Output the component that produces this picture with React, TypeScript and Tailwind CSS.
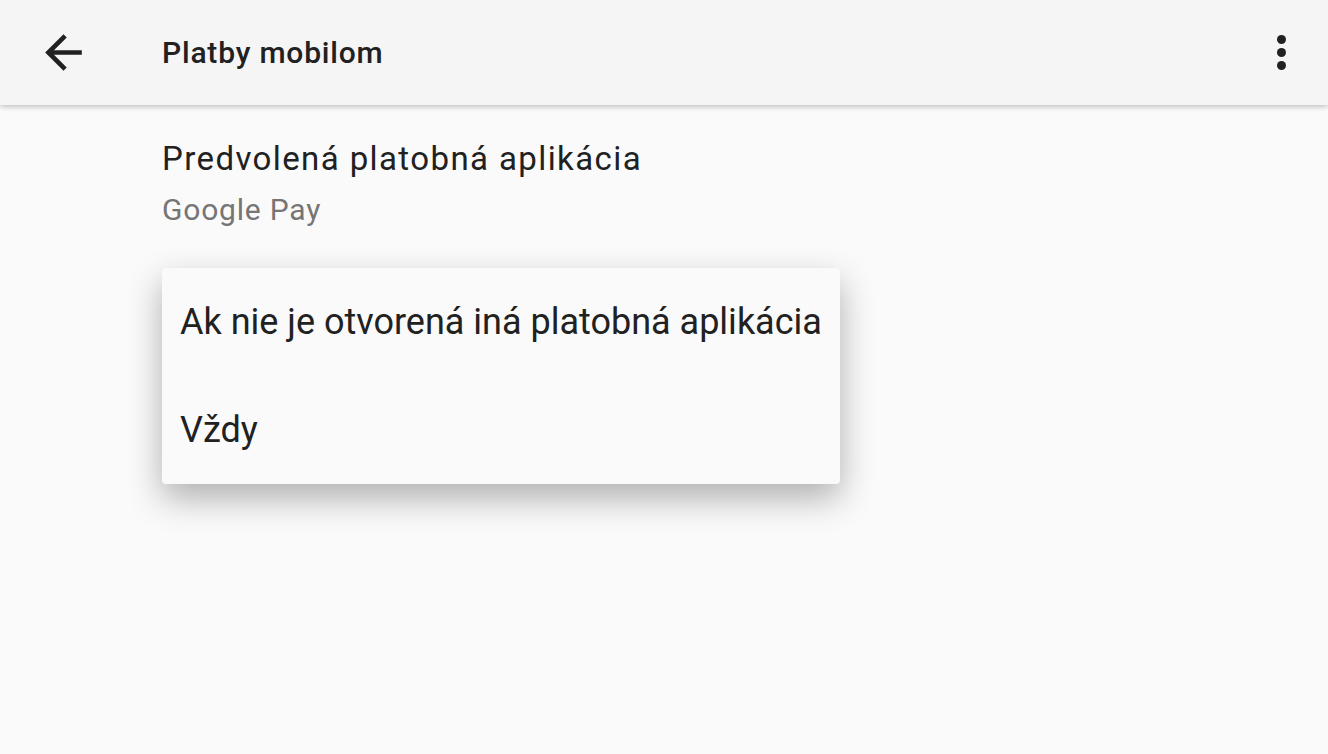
const options = ["Ak nie je otvorená iná platobná aplikácia", "Vždy"];

export default function App() {
  return (
    <div className="relative h-[754px] w-[1328px] overflow-hidden bg-[#fafafa] font-['Roboto',sans-serif] text-[#212121]">
      <header className="relative z-10 flex h-[105px] items-center bg-[#f5f5f5] shadow-[0_2px_5px_rgba(0,0,0,0.22)]">
        <div className="flex w-[162px] items-center pl-[36px]">
          <svg viewBox="0 0 24 24" className="h-[55px] w-[55px] fill-[#212121]">
            <path d="M20 11H7.83l5.59-5.59L12 4l-8 8 8 8 1.41-1.41L7.83 13H20v-2z" />
          </svg>
        </div>
        <h1 className="flex-1 text-[30px] font-medium tracking-[0.8px]">Platby mobilom</h1>
        <div className="flex w-[92px] flex-col items-center gap-[4px] pr-[2px]">
          <span className="h-[9px] w-[9px] rounded-full bg-[#212121]" />
          <span className="h-[9px] w-[9px] rounded-full bg-[#212121]" />
          <span className="h-[9px] w-[9px] rounded-full bg-[#212121]" />
        </div>
      </header>

      <div className="pl-[162px] pt-[30px]">
        <div className="text-[33px] leading-[48px] tracking-[1.4px]">Predvolená platobná aplikácia</div>
        <div className="mt-[7px] text-[30px] leading-[40px] tracking-[0.8px] text-[#757575]">Google Pay</div>
      </div>

      <div className="absolute left-[162px] top-[268px] w-[678px] rounded-[4px] bg-[#fafafa] shadow-[0_14px_34px_rgba(0,0,0,0.3)]">
        {options.map((o) => (
          <div key={o} className="flex h-[108px] items-center px-[18px] text-[36px]">
            {o}
          </div>
        ))}
      </div>
    </div>
  );
}
